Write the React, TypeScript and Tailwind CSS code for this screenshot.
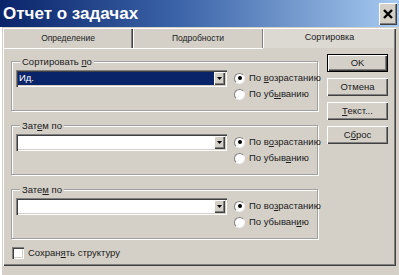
import React from "react";

const raised =
  "bg-[#d4d0c8] shadow-[inset_1px_1px_0_#ffffff,inset_-1px_-1px_0_#404040,inset_-2px_-2px_0_#808080]";
const sunken =
  "shadow-[inset_1px_1px_0_#808080,inset_2px_2px_0_#404040,inset_-1px_-1px_0_#ffffff,inset_-2px_-2px_0_#d4d0c8]";

function Combo({ value, selected }: { value?: string; selected?: boolean }) {
  return (
    <div className={`w-[211px] h-[17px] shrink-0 bg-white ${sunken} p-[2px] flex`}>
      <div
        className={`flex-1 flex items-center pl-[1px] ${
          selected ? "bg-[#0a246a] text-white" : "bg-white"
        }`}
      >
        {value}
      </div>
      <div className={`w-[11px] h-full ${raised} flex items-center justify-center`}>
        <svg width="5" height="3" viewBox="0 0 5 3">
          <path d="M0 0H5L2.5 3Z" fill="#000" />
        </svg>
      </div>
    </div>
  );
}

function Radio({ checked, children }: { checked?: boolean; children: React.ReactNode }) {
  return (
    <div className="flex items-center h-[16px] gap-[4px] whitespace-nowrap">
      <div className="w-[11px] h-[11px] shrink-0 rounded-full bg-white border border-t-[#808080] border-l-[#808080] border-r-[#f0f0f0] border-b-[#f0f0f0] flex items-center justify-center">
        {checked && <div className="w-[4px] h-[4px] rounded-full bg-black" />}
      </div>
      <span>{children}</span>
    </div>
  );
}

function Group({
  label,
  value,
  selected,
  asc,
  desc,
}: {
  label: React.ReactNode;
  value?: string;
  selected?: boolean;
  asc: React.ReactNode;
  desc: React.ReactNode;
}) {
  return (
    <fieldset className="w-[307px] min-w-0 border border-[#a0a0a0] shadow-[inset_1px_1px_0_#ffffff,1px_1px_0_#ffffff] pl-[4px] pt-[3px] pb-[8px]">
      <legend className="ml-[4px] px-[2px] leading-[11px] bg-[#d4d0c8]">{label}</legend>
      <div className="flex items-start">
        <Combo value={value} selected={selected} />
        <div className="ml-[7px] flex flex-col">
          <Radio checked>{asc}</Radio>
          <Radio>{desc}</Radio>
        </div>
      </div>
    </fieldset>
  );
}

function Btn({ children, def }: { children: React.ReactNode; def?: boolean }) {
  return (
    <div
      className={`h-[18px] w-[61px] flex items-center justify-center ${raised} ${
        def ? "outline outline-1 outline-black -outline-offset-1 shadow-[inset_2px_2px_0_#ffffff,inset_-2px_-2px_0_#404040,inset_-3px_-3px_0_#808080]" : ""
      }`}
    >
      {children}
    </div>
  );
}

export default function App() {
  return (
    <div className="w-[399px] h-[275px] bg-[#d4d0c8] overflow-hidden flex flex-col font-['Liberation_Sans',Arial,sans-serif] text-[9.5px] text-[#202020] shadow-[inset_2px_0_0_#ffffff]">
      {/* Title bar */}
      <div className="h-[27px] shrink-0 flex items-center justify-between pl-[3px] pr-[2px] bg-[linear-gradient(to_right,#0a246a,#3c64a8_45%,#a6caf0)]">
        <span className="text-white font-bold text-[17px] leading-none">
          Отчет о задачах
        </span>
        <div className={`w-[18px] h-[22px] ${raised} flex items-center justify-center`}>
          <svg width="10" height="10" viewBox="0 0 10 10">
            <path d="M1 1L9 9M9 1L1 9" stroke="#000" strokeWidth="2.4" />
          </svg>
        </div>
      </div>

      {/* Tabs */}
      <div className="mt-[1px] ml-[3px] w-[393px] h-[20px] flex shrink-0 text-[8.5px]">
        <div className="w-[130px] flex items-center justify-center shadow-[inset_1px_1px_0_#ffffff,inset_-1px_0_0_#404040,inset_-2px_0_0_#808080]">
          Определение
        </div>
        <div className="w-[130px] flex items-center justify-center shadow-[inset_1px_1px_0_#ffffff,inset_-1px_0_0_#808080]">
          Подробности
        </div>
        <div className="flex-1 flex items-center justify-center bg-[#dcd9d2] text-[9px] shadow-[inset_1px_1px_0_#ffffff,inset_-1px_0_0_#404040,inset_-2px_0_0_#808080]">
          Сортировка
        </div>
      </div>

      {/* Panel */}
      <div className="ml-[3px] w-[393px] h-[218px] shrink-0 flex shadow-[inset_1px_0_0_#ffffff,inset_-1px_-1px_0_#404040,inset_-2px_-2px_0_#808080]">
        <div className="flex-1 flex flex-col">
          <div className="h-[1px] w-[260px] bg-white" />
          <div className="pl-[8px] pt-[7px] flex flex-col gap-[9px]">
            <Group
              label={<>Сортировать <u>п</u>о</>}
              value="Ид."
              selected
              asc={<>По <u>в</u>озрастанию</>}
              desc={<>По уб<u>ы</u>ванию</>}
            />
            <Group
              label={<>Зат<u>е</u>м по</>}
              asc={<>По в<u>о</u>зрастанию</>}
              desc={<>По убыв<u>а</u>нию</>}
            />
            <Group
              label={<>Зате<u>м</u> по</>}
              asc={<>По во<u>з</u>растанию</>}
              desc={<>По убыван<u>и</u>ю</>}
            />
          </div>
          <div className="pl-[9px] mt-[7px] flex items-center gap-[4px]">
            <div className={`w-[12px] h-[12px] bg-white ${sunken}`} />
            <span>
              Сохран<u>я</u>ть структуру
            </span>
          </div>
        </div>
        <div className="w-[69px] shrink-0 pt-[6px] flex flex-col gap-[6px]">
          <Btn def>OK</Btn>
          <Btn>Отмена</Btn>
          <Btn>
            <span>
              <u>Т</u>екст...
            </span>
          </Btn>
          <Btn>
            <span>
              С<u>б</u>рос
            </span>
          </Btn>
        </div>
      </div>
    </div>
  );
}
